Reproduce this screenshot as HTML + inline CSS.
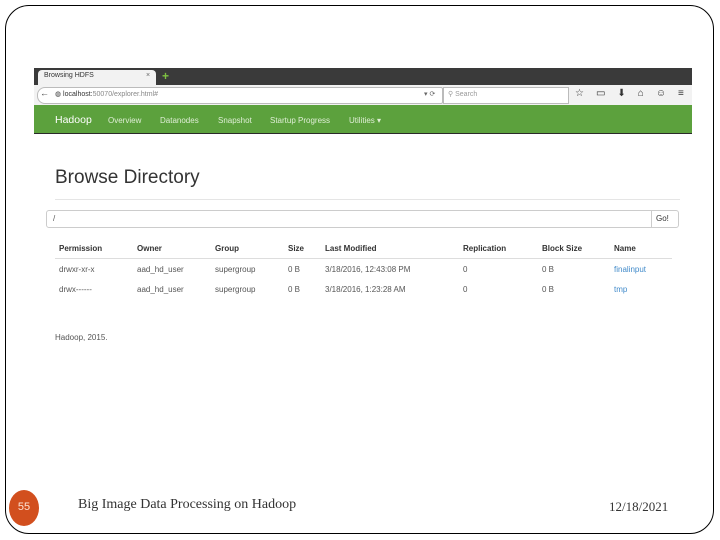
<!DOCTYPE html>
<html><head><style>
body{margin:0;width:720px;height:540px;background:#fff;position:relative;overflow:hidden;font-family:"Liberation Sans",sans-serif}
.a{position:absolute}
.frame{left:5px;top:5px;width:709px;height:529px;border:1.5px solid #000;border-radius:24px;box-sizing:border-box}
.t{font-size:8px;color:#555;white-space:nowrap}
.th{font-size:8px;font-weight:bold;color:#333;white-space:nowrap}
.nav{font-size:8px;color:#dfeed6;white-space:nowrap}
</style></head><body>
<div class="a frame"></div>
<div class="a" style="left:34px;top:68px;width:658px;height:17px;background:#3a3a3a"></div>
<div class="a" style="left:38px;top:70px;width:118px;height:15px;background:#f2f2f2;border-radius:4px 4px 0 0"></div>
<div class="a t" style="left:44px;top:72px;font-size:7px;color:#333">Browsing HDFS</div>
<div class="a t" style="left:146px;top:72px;font-size:7px;color:#666">×</div>
<div class="a" style="left:162px;top:71px;font-size:12px;color:#7ec241;font-weight:bold;line-height:10px">+</div>
<div class="a" style="left:34px;top:85px;width:658px;height:20px;background:#f2f2f2"></div>
<div class="a" style="left:37px;top:87px;width:404px;height:15px;background:#fff;border:1px solid #bbb;border-radius:8px 2px 2px 8px"></div>
<div class="a t" style="left:40px;top:88px;font-size:9px;color:#444">←</div>
<div class="a t" style="left:55px;top:90px;font-size:7px;color:#333">◍ localhost:<span style="color:#888">50070/explorer.html#</span></div>
<div class="a t" style="left:424px;top:90px;font-size:7px;color:#666">▾ ⟳</div>
<div class="a" style="left:443px;top:87px;width:124px;height:15px;background:#fff;border:1px solid #bbb"></div>
<div class="a t" style="left:448px;top:90px;font-size:7px;color:#999">⚲ Search</div>
<div class="a t" style="left:575px;top:88px;font-size:10px;color:#333;letter-spacing:12px">☆▭⬇⌂☺≡</div>
<div class="a" style="left:34px;top:105px;width:658px;height:28px;background:#5ca13d;border-bottom:1px solid #2a2a2a"></div>
<div class="a" style="left:55px;top:114px;font-size:10.5px;color:#fff;white-space:nowrap">Hadoop</div>
<div class="a nav" style="left:108px;top:116px">Overview</div>
<div class="a nav" style="left:160px;top:116px">Datanodes</div>
<div class="a nav" style="left:218px;top:116px">Snapshot</div>
<div class="a nav" style="left:270px;top:116px">Startup Progress</div>
<div class="a nav" style="left:349px;top:116px">Utilities ▾</div>
<div class="a" style="left:55px;top:167px;font-size:19px;color:#333;white-space:nowrap">Browse Directory</div>
<div class="a" style="left:55px;top:199px;width:625px;height:1px;background:#e5e5e5"></div>
<div class="a" style="left:46px;top:210px;width:633px;height:18px;border:1px solid #ccc;border-radius:3px;box-sizing:border-box"></div>
<div class="a" style="left:651px;top:210px;width:1px;height:18px;background:#ccc"></div>
<div class="a t" style="left:53px;top:214px">/</div>
<div class="a t" style="left:656px;top:214px;color:#333">Go!</div>
<div class="a th" style="left:59px;top:244px">Permission</div>
<div class="a th" style="left:137px;top:244px">Owner</div>
<div class="a th" style="left:215px;top:244px">Group</div>
<div class="a th" style="left:288px;top:244px">Size</div>
<div class="a th" style="left:325px;top:244px">Last Modified</div>
<div class="a th" style="left:463px;top:244px">Replication</div>
<div class="a th" style="left:542px;top:244px">Block Size</div>
<div class="a th" style="left:614px;top:244px">Name</div>
<div class="a" style="left:55px;top:258px;width:617px;height:1px;background:#ddd"></div>
<div class="a t" style="left:59px;top:265px">drwxr-xr-x</div>
<div class="a t" style="left:137px;top:265px">aad_hd_user</div>
<div class="a t" style="left:215px;top:265px">supergroup</div>
<div class="a t" style="left:288px;top:265px">0 B</div>
<div class="a t" style="left:325px;top:265px">3/18/2016, 12:43:08 PM</div>
<div class="a t" style="left:463px;top:265px">0</div>
<div class="a t" style="left:542px;top:265px">0 B</div>
<div class="a t" style="left:614px;top:265px;color:#428bca">finalinput</div>
<div class="a t" style="left:59px;top:285px">drwx------</div>
<div class="a t" style="left:137px;top:285px">aad_hd_user</div>
<div class="a t" style="left:215px;top:285px">supergroup</div>
<div class="a t" style="left:288px;top:285px">0 B</div>
<div class="a t" style="left:325px;top:285px">3/18/2016, 1:23:28 AM</div>
<div class="a t" style="left:463px;top:285px">0</div>
<div class="a t" style="left:542px;top:285px">0 B</div>
<div class="a t" style="left:614px;top:285px;color:#428bca">tmp</div>
<div class="a t" style="left:55px;top:333px">Hadoop, 2015.</div>
<div class="a" style="left:9px;top:490px;width:30px;height:36px;border-radius:50%;background:#d24f1e"></div>
<div class="a" style="left:9px;top:501px;width:30px;text-align:center;font-size:11px;color:#fde3d6">55</div>
<div class="a" style="left:78px;top:497px;font-family:'Liberation Serif',serif;font-size:14px;color:#333;white-space:nowrap">Big Image Data Processing on Hadoop</div>
<div class="a" style="left:609px;top:499px;font-family:'Liberation Serif',serif;font-size:13px;color:#333">12/18/2021</div>
</body></html>
